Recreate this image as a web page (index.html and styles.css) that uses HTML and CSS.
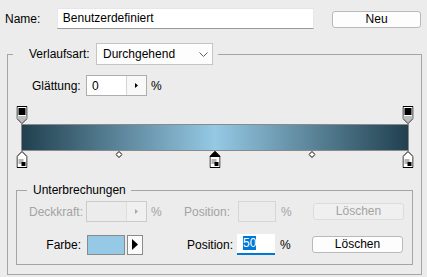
FILE: index.html
```
<!DOCTYPE html>
<html lang="de">
<head>
<meta charset="utf-8">
<title>Verlaufsumsetzung</title>
<link rel="stylesheet" href="styles.css">
</head>
<body>
<div class="dialog">
  <div class="name-row">
    <span class="name-lbl">Name:</span>
    <div class="textfield">Benutzerdefiniert</div>
    <div class="btn btn-neu">Neu</div>
  </div>

  <fieldset class="group outer">
    <legend class="outer-legend">
      <span class="type-lbl">Verlaufsart:</span>
      <div class="select">
        <span>Durchgehend</span>
        <svg class="chev" width="9" height="5" viewBox="0 0 9 5"><polyline points="0.5,0.5 4.5,4.5 8.5,0.5" fill="none" stroke="#606060" stroke-width="1"/></svg>
      </div>
    </legend>

    <div class="smooth-row">
      <span class="smooth-lbl">Glättung:</span>
      <div class="spin">
        <span class="spin-val">0</span>
        <span class="spin-btn"><svg width="3" height="5" viewBox="0 0 3 5"><polygon points="0,0 3,2.5 0,5" fill="#000"/></svg></span>
      </div>
      <span class="pct">%</span>
    </div>

    <div class="editor">
      <div class="track track-top">
        <span class="stop stop-top" style="left:0%"><svg width="11" height="18" viewBox="0 0 11 18"><path d="M0.5 0.5H10.5V12.5L5.5 17.5L0.5 12.5Z" fill="#fff" stroke="#000"/><path d="M1 10H10V12.3L5.5 16.8L1 12.3Z" fill="#bdbdbd"/><rect x="2" y="2" width="7" height="7" fill="#000"/></svg></span>
        <span class="stop stop-top" style="left:100%"><svg width="11" height="18" viewBox="0 0 11 18"><path d="M0.5 0.5H10.5V12.5L5.5 17.5L0.5 12.5Z" fill="#fff" stroke="#000"/><path d="M1 10H10V12.3L5.5 16.8L1 12.3Z" fill="#bdbdbd"/><rect x="2" y="2" width="7" height="7" fill="#000"/></svg></span>
      </div>
      <div class="bar"></div>
      <div class="track track-bottom">
        <span class="mid" style="left:25%"><svg width="7" height="7" viewBox="0 0 7 7"><path d="M3.5 0.5L6.5 3.5L3.5 6.5L0.5 3.5Z" fill="#fff" stroke="#000"/></svg></span>
        <span class="mid" style="left:75%"><svg width="7" height="7" viewBox="0 0 7 7"><path d="M3.5 0.5L6.5 3.5L3.5 6.5L0.5 3.5Z" fill="#fff" stroke="#000"/></svg></span>
        <span class="stop stop-bottom" style="left:0%"><svg width="11" height="17" viewBox="0 0 11 17"><path d="M0.5 16.5V5.5L5.5 0.5L10.5 5.5V16.5Z" fill="#fff" stroke="#000"/><rect x="2" y="8" width="5" height="5" fill="#b4b4b4"/><rect x="5" y="11" width="4" height="4" fill="#000"/></svg></span>
        <span class="stop stop-bottom" style="left:50%"><svg width="11" height="17" viewBox="0 0 11 17"><path d="M0.5 16.5V5.5L5.5 0.5L10.5 5.5V16.5Z" fill="#fff" stroke="#000"/><path d="M0.5 5.5L5.5 0.5L10.5 5.5Z" fill="#000" stroke="#000"/><rect x="2" y="8" width="5" height="5" fill="#b4b4b4"/><rect x="5" y="11" width="4" height="4" fill="#000"/></svg></span>
        <span class="stop stop-bottom" style="left:100%"><svg width="11" height="17" viewBox="0 0 11 17"><path d="M0.5 16.5V5.5L5.5 0.5L10.5 5.5V16.5Z" fill="#fff" stroke="#000"/><rect x="2" y="8" width="5" height="5" fill="#b4b4b4"/><rect x="5" y="11" width="4" height="4" fill="#000"/></svg></span>
      </div>
    </div>

    <fieldset class="group inner">
      <legend class="inner-legend">Unterbrechungen</legend>

      <div class="stop-row row-opacity disabled">
        <span class="row-lbl">Deckkraft:</span>
        <div class="spin spin-disabled">
          <span class="spin-val"></span>
          <span class="spin-btn"><svg width="3" height="5" viewBox="0 0 3 5"><polygon points="0,0 3,2.5 0,5" fill="#a8a8a8"/></svg></span>
        </div>
        <span class="pct pct-a">%</span>
        <span class="pos-lbl">Position:</span>
        <div class="pos-input pos-disabled"></div>
        <span class="pct pct-b">%</span>
        <div class="btn btn-del btn-disabled">Löschen</div>
      </div>

      <div class="stop-row row-color">
        <span class="row-lbl">Farbe:</span>
        <div class="swatch"></div>
        <div class="swatch-btn"><svg width="6" height="11" viewBox="0 0 6 11"><polygon points="0,0 6,5.5 0,11" fill="#000"/></svg></div>
        <span class="pos-lbl">Position:</span>
        <div class="pos-input pos-active"><span class="sel">50</span></div>
        <span class="pct pct-b">%</span>
        <div class="btn btn-del">Löschen</div>
      </div>
    </fieldset>
  </fieldset>
</div>
</body>
</html>
```

FILE: styles.css
```
* { box-sizing: border-box; }

html, body {
  margin: 0;
  padding: 0;
  background: #ececec;
}

body {
  font-family: "Liberation Sans", Arial, sans-serif;
  font-size: 12px;
  color: #000;
  width: 427px;
  height: 277px;
  overflow: hidden;
}

.dialog {
  padding: 8px 6px 0 5px;
}

/* Name row */
.name-row {
  display: flex;
  align-items: center;
  height: 21px;
}

.name-lbl {
  width: 52px;
}

.textfield {
  width: 258px;
  height: 21px;
  background: #fff;
  border: 1px solid #e6e6e6;
  border-bottom-color: #9a9a9a;
  padding: 2px 0 0 5px;
  line-height: 15px;
}

.btn {
  display: flex;
  align-items: center;
  justify-content: center;
  background: #fdfdfd;
  border: 1px solid #b9b9b9;
  border-radius: 3px;
  height: 17px;
  line-height: 15px;
}

.btn-neu {
  margin-left: 18px;
  width: 89px;
  margin-top: 1px;
}

/* Group boxes */
.group {
  margin: 0;
  border: 1px solid #a5a5a5;
  min-width: 0;
}

.outer {
  margin: 14px 0 0 2px;
  width: 415px;
  height: 232px;
  padding: 0 8px 0 8px;
}

.outer-legend {
  display: flex;
  align-items: center;
  margin-left: -3px;
  padding: 0 5px 0 16px;
  height: 22px;
}

.type-lbl {
  width: 67px;
}

.select {
  display: flex;
  align-items: center;
  justify-content: space-between;
  width: 117px;
  height: 22px;
  background: #fdfdfd;
  border: 1px solid #c4c4c4;
  padding: 0 4px 0 6px;
}

.chev { margin-top: 1px; }

/* Smoothness row */
.smooth-row {
  display: flex;
  align-items: center;
  margin-top: 10px;
  height: 21px;
  padding-left: 16px;
}

.smooth-lbl { width: 54px; }

.spin {
  display: flex;
  width: 61px;
  height: 21px;
  border: 1px solid #adadad;
  background: #fff;
}

.spin-val {
  width: 40px;
  border-right: 1px solid #d6d6d6;
  padding: 3px 0 0 5px;
  line-height: 14px;
}

.spin-btn {
  flex: 1;
  display: flex;
  align-items: center;
  justify-content: center;
  background: #f8f8f8;
}

.pct { margin-left: 4px; }

/* Gradient editor */
.editor {
  margin: 10px 4px 0 5px;
}

.track {
  position: relative;
  margin: 0 1px;
  height: 18px;
}

.track-bottom { height: 18px; }

.bar {
  height: 27px;
  border: 1px solid #8a8a8a;
  background: linear-gradient(to right, #21404f 0%, #95c9e4 50%, #21404f 100%);
}

.stop {
  position: absolute;
  display: block;
  width: 11px;
  transform: translateX(-50%);
  line-height: 0;
}

.stop-top { top: 0; }
.stop-bottom { top: 0; }

.mid {
  position: absolute;
  top: 0;
  width: 7px;
  transform: translateX(-50%);
  line-height: 0;
}

/* Inner group */
.inner {
  margin-top: 14px;
  height: 82px;
  padding: 0 0 0 0;
}

.inner-legend {
  margin-left: 10px;
  padding: 0 5px 0 6px;
  line-height: 14px;
}

.stop-row {
  display: flex;
  align-items: center;
  height: 21px;
}

.row-opacity { margin-top: 4px; }
.row-color { margin-top: 12px; }

.disabled { color: #a3a3a3; }

.row-lbl {
  width: 66px;
  text-align: right;
}

.row-color .row-lbl { padding-right: 2px; }

.row-opacity .spin { margin-left: 3px; }

.spin-disabled {
  border-color: #cbcbcb;
  background: #ececec;
}

.spin-disabled .spin-val { border-right-color: #dedede; }
.spin-disabled .spin-btn { background: #f0f0f0; }

.pct-a { margin-left: 4px; width: 30px; }

.pos-lbl { width: 52px; }

.row-opacity .pos-lbl { margin-left: 3px; }
.row-color .pos-lbl { margin-left: 44px; width: 50px; }

.pos-input {
  width: 38px;
  height: 21px;
}

.pos-disabled {
  border: 1px solid #d6d6d6;
  margin-left: 2px;
}

.pos-active {
  background: #fff;
  border-bottom: 2px solid #0078d7;
  padding: 3px 0 0 6px;
  line-height: 13px;
}

.sel {
  background: #0078d7;
  color: #fff;
}

.pct-b { margin-left: 5px; width: 32px; }

.btn-del {
  width: 91px;
  height: 17px;
}

.btn-disabled {
  color: #a3a3a3;
  border-color: #dcdcdc;
  background: #f0f0f0;
}

.swatch {
  margin-left: 4px;
  width: 38px;
  height: 20px;
  background: #95c9e5;
  border: 1px solid #8a8a8a;
}

.swatch-btn {
  margin-left: 2px;
  width: 16px;
  height: 20px;
  background: #fbfbfb;
  border: 1px solid #8a8a8a;
  display: flex;
  align-items: center;
  justify-content: center;
}
```
